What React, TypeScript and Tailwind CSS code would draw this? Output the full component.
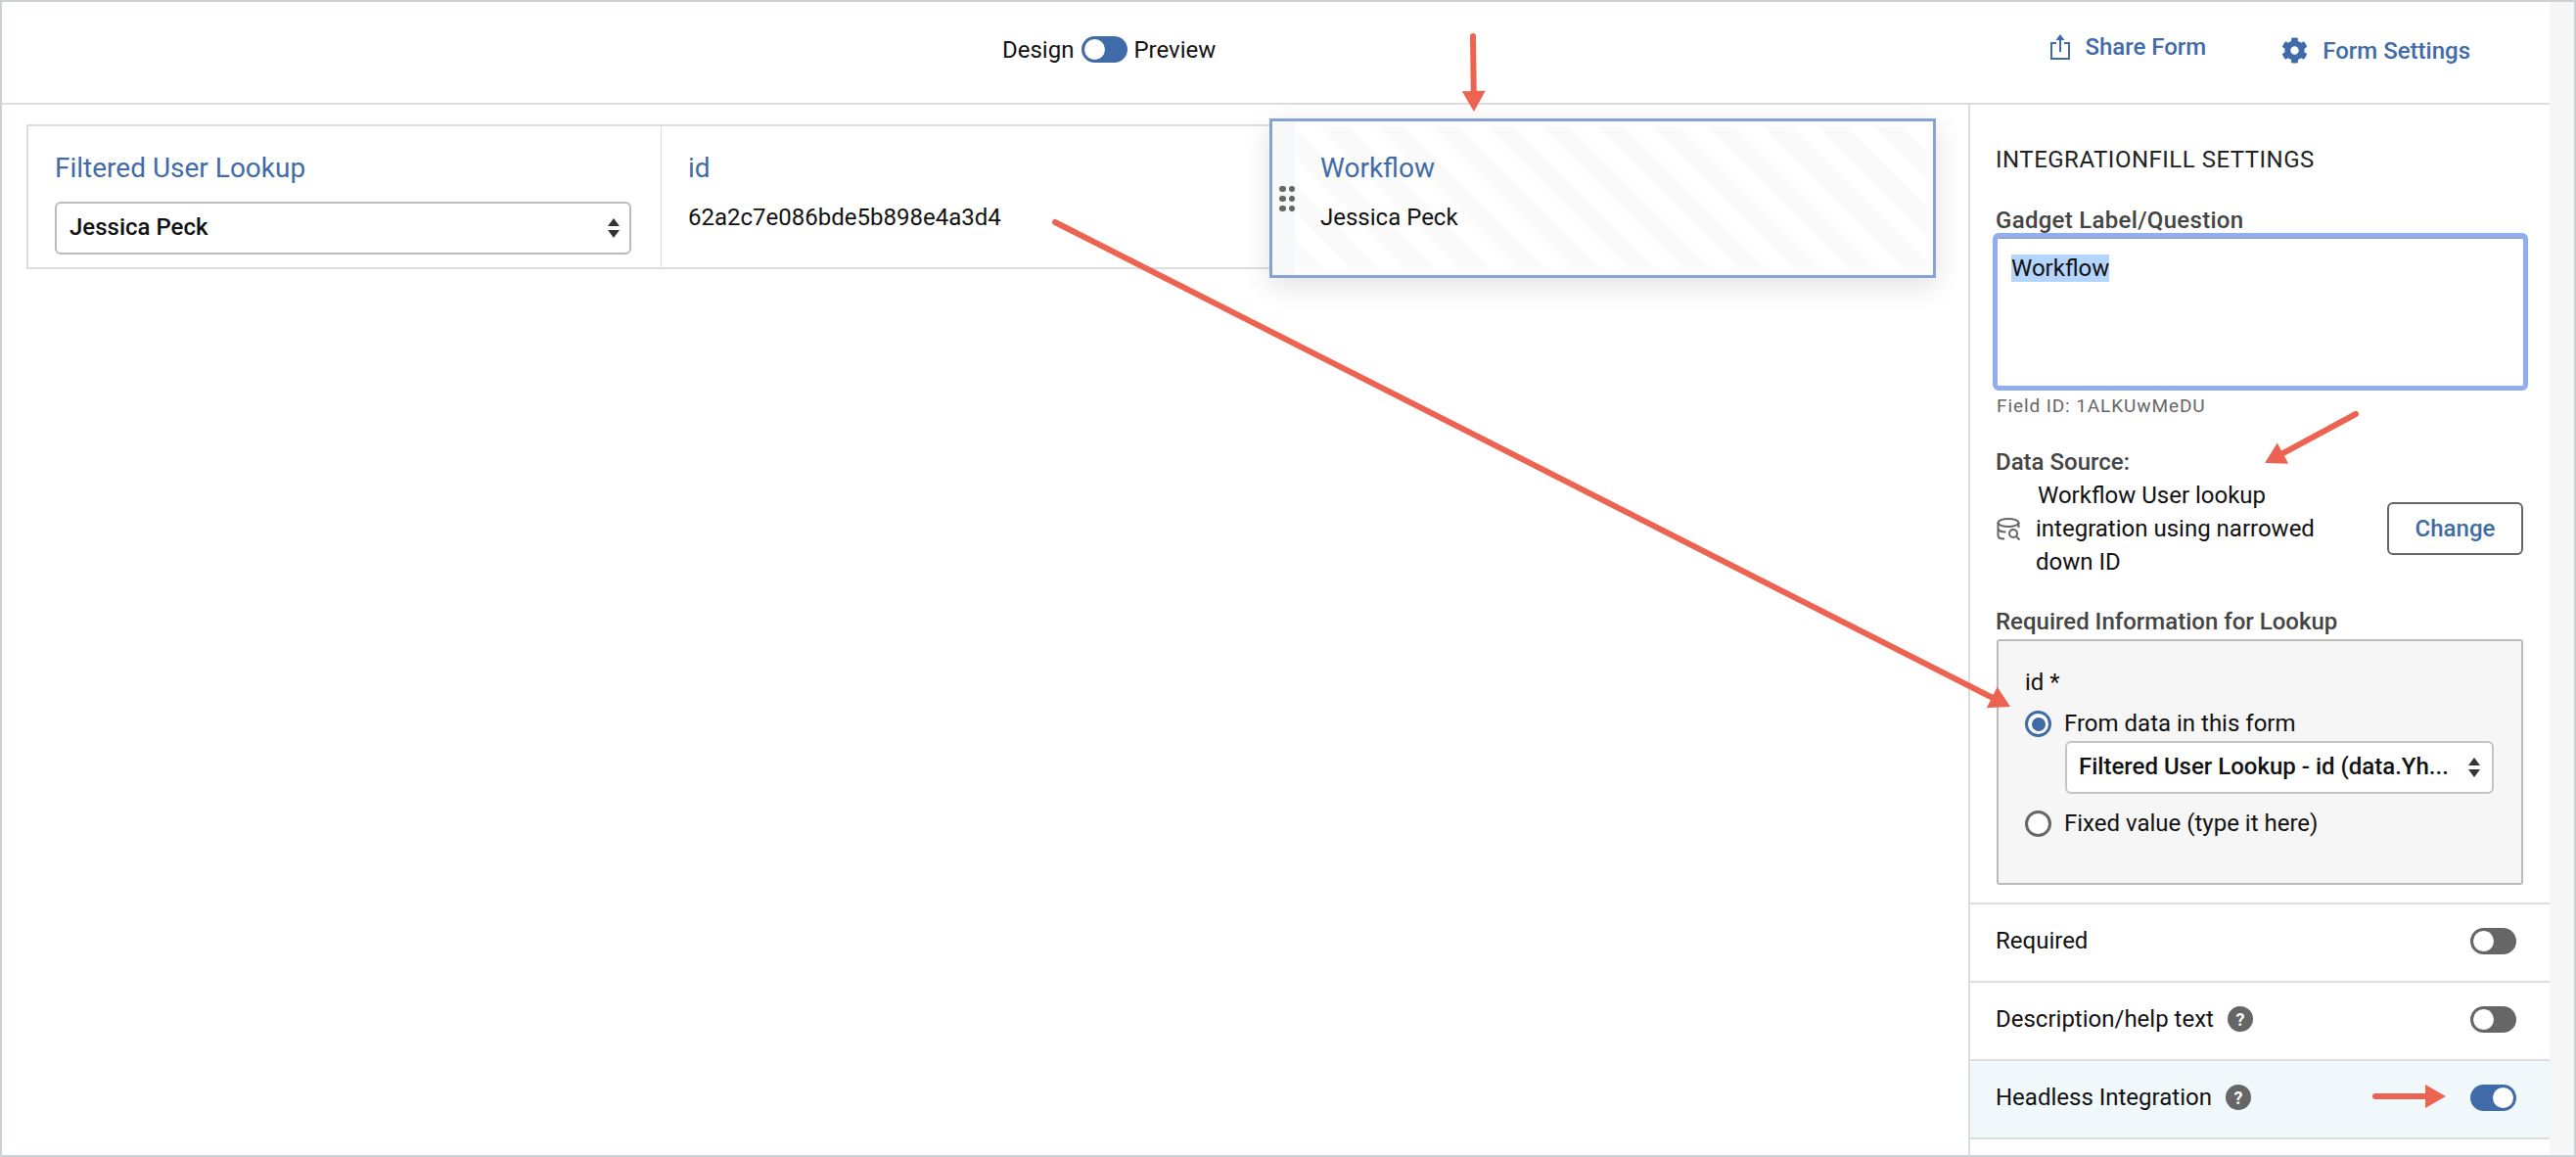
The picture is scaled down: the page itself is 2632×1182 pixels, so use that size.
import { FaCog } from 'react-icons/fa';

const font = { fontFamily: 'Roboto, sans-serif' };

function Toggle({ on = false, color = 'bg-[#666666]' }: { on?: boolean; color?: string }) {
  return (
    <div className={`flex h-[27px] w-[47px] shrink-0 items-center rounded-full px-[3px] ${color} ${on ? 'justify-end' : 'justify-start'}`}>
      <div className="h-[21px] w-[21px] rounded-full bg-white" />
    </div>
  );
}

function Chevrons({ className = '' }: { className?: string }) {
  return (
    <svg viewBox="0 0 12 20" className={`h-[20px] w-[12px] shrink-0 fill-[#333333] ${className}`}>
      <path d="M6 0 12 8H0z" />
      <path d="M6 20 0 12h12z" />
    </svg>
  );
}

function Help() {
  return (
    <span className="flex h-[26px] w-[26px] items-center justify-center rounded-full bg-[#666666] text-[18px] font-bold text-white">?</span>
  );
}

function Radio({ checked = false }: { checked?: boolean }) {
  return (
    <span className={`flex h-[27px] w-[27px] shrink-0 items-center justify-center rounded-full border-[3px] bg-white ${checked ? 'border-[#3f6ba8]' : 'border-[#666666]'}`}>
      {checked && <span className="h-[14px] w-[14px] rounded-full bg-[#3f6ba8]" />}
    </span>
  );
}

function Arrow({ x1, y1, x2, y2 }: { x1: number; y1: number; x2: number; y2: number }) {
  const len = Math.hypot(x2 - x1, y2 - y1);
  const ux = (x2 - x1) / len;
  const uy = (y2 - y1) / len;
  const bx = x2 - ux * 21;
  const by = y2 - uy * 21;
  const pts = `${x2},${y2} ${bx - uy * 12},${by + ux * 12} ${bx + uy * 12},${by - ux * 12}`;
  return (
    <g>
      <line x1={x1} y1={y1} x2={bx} y2={by} stroke="#ec6351" strokeWidth="6" strokeLinecap="round" />
      <polygon points={pts} fill="#ec6351" />
    </g>
  );
}

function SettingRow({ label, help, children, tint }: { label: string; help?: boolean; children: React.ReactNode; tint?: boolean }) {
  return (
    <div className={`flex h-[80px] items-center border-t-2 border-[#dddddd] pb-[4px] pl-[26px] pr-[34px] ${tint ? 'bg-[#f1f8fc]' : ''}`}>
      <span className="text-[24px] text-[#111111]">{label}</span>
      {help && <span className="ml-[14px]"><Help /></span>}
      <div className="ml-auto flex items-center">{children}</div>
    </div>
  );
}

export default function App() {
  return (
    <div style={font} className="relative flex h-[1182px] w-[2632px] overflow-hidden border-2 border-[#ccd1d4] bg-[#f6f6f6]">
      <div className="flex h-full w-[2603px] flex-col bg-white">
        {/* top bar */}
        <div className="flex h-[105px] shrink-0 items-start border-b-2 border-[#dddddd] pl-[1022px] pr-[81px]">
          <div className="mt-[35px] flex items-center text-[24px] leading-[26px] text-[#111111]">
            <span>Design</span>
            <span className="ml-[8px] mr-[6px]"><Toggle color="bg-[#3f6ba8]" /></span>
            <span>Preview</span>
          </div>
          <div className="ml-auto flex items-start">
            <div className="mt-[32px] flex items-center gap-[15px] text-[24px] font-medium leading-[26px] text-[#3f6ba8]">
              <svg viewBox="0 0 20 27" className="h-[27px] w-[20px] fill-none stroke-[#3f6ba8] stroke-2">
                <path d="M6 10H1v16h18V10h-5" />
                <path d="M10 19V4" />
                <path d="M5.500 7 10 1l4.500 6z" className="fill-[#3f6ba8] stroke-0" />
              </svg>
              <span>Share Form</span>
            </div>
            <div className="ml-[77px] mt-[36px] flex items-center gap-[15px] text-[24px] font-medium leading-[26px] text-[#3f6ba8]">
              <FaCog size={27} />
              <span>Form Settings</span>
            </div>
          </div>
        </div>

        <div className="flex min-h-0 flex-1">
          {/* canvas */}
          <div className="min-w-0 flex-1 pl-[25px] pt-[20px]">
            <div className="flex h-[148px] w-[1951px] items-start border-y-2 border-l-2 border-[#dddddd]">
              <div className="h-full w-[646px] shrink-0 pl-[27px] pt-[28px]">
                <div className="text-[28px] leading-[30px] text-[#3f6ba8]">Filtered User Lookup</div>
                <div className="mt-[19px] flex h-[54px] w-[589px] items-center justify-between rounded-[6px] border-2 border-[#bbbbbb] pl-[13px] pr-[10px] text-[24px] font-medium leading-[26px] text-[#111111]">
                  <span className="-mt-[3px]">Jessica Peck</span>
                  <Chevrons />
                </div>
              </div>
              <div className="h-full w-[622px] shrink-0 border-l border-[#dddddd] pl-[27px] pt-[28px]">
                <div className="text-[28px] leading-[30px] text-[#3f6ba8]">id</div>
                <div className="mt-[22px] text-[24px] leading-[26px] text-[#111111]">62a2c7e086bde5b898e4a3d4</div>
              </div>
              <div className="relative z-10 -mt-[8px] flex h-[163px] w-[681px] shrink-0 border-[3px] border-[#85a3d7] bg-[#fdfdfe] shadow-[0_8px_28px_rgba(0,0,0,0.12)]">
                <div className="flex w-[23px] shrink-0 items-center justify-end bg-[#f7f8fa] pt-[1px]">
                  <div className="grid grid-cols-2 gap-x-[3px] gap-y-[3.500px]">
                    {[0, 1, 2, 3, 4, 5].map((i) => (
                      <span key={i} className="h-[6.500px] w-[6.500px] rounded-full bg-[#666666]" />
                    ))}
                  </div>
                </div>
                <div className="flex-1 pb-[8px] pr-[7px] pt-[5px]">
                  <div className="h-full bg-[repeating-linear-gradient(45deg,#fafafa_0,#fafafa_20px,#ffffff_20px,#ffffff_40px)] pl-[26px] pt-[28px]">
                    <div className="text-[28px] leading-[30px] text-[#3f6ba8]">Workflow</div>
                    <div className="mt-[22px] text-[24px] leading-[26px] text-[#111111]">Jessica Peck</div>
                  </div>
                </div>
              </div>
            </div>
          </div>

          {/* settings panel */}
          <div className="flex w-[594px] shrink-0 flex-col border-l-2 border-[#dddddd]">
            <div className="px-[27px] pt-[43px]">
              <div className="-ml-px text-[24px] leading-[26px] tracking-[0.500px] text-[#222222]">INTEGRATIONFILL SETTINGS</div>
              <div className="-ml-px mt-[36px] text-[24px] font-medium leading-[26px] tracking-[0.300px] text-[#444444]">Gadget Label/Question</div>
              <div className="-ml-[4px] h-[161px] w-[547px] rounded-[6px] border-[5px] border-[#8fadef] bg-white pl-[14px] pt-[17px] text-[24px] leading-[28px] text-[#111111] shadow-[inset_0_1px_0_#999999]">
                <span className="bg-[#b4d5fe]">Workflow</span>
              </div>
              <div className="mt-[4px] text-[19px] leading-[24px] tracking-[0.900px] text-[#666666]">Field ID: 1ALKUwMeDU</div>
              <div className="-ml-px mt-[32px] text-[24px] font-medium leading-[26px] text-[#444444]">Data Source:</div>
              <div className="mt-[4px] flex items-center">
                <svg viewBox="0 0 25 23" className="h-[23px] w-[25px] shrink-0 fill-none stroke-[#666666] stroke-2">
                  <ellipse cx="12" cy="5" rx="10.500" ry="4" />
                  <path d="M1.500 5v13c0 2 2.500 3.500 6.500 3.500M22.500 5v5M1.500 11.500c1 2 4.500 3 8 3" />
                  <circle cx="17" cy="16" r="4" />
                  <path d="M20 19l3.500 3.500" />
                </svg>
                <div className="ml-[15px] w-[359px] shrink-0 text-[24px] leading-[34px] text-[#111111]">
                  <span className="ml-[2px]">Workflow User lookup</span>
                  <br />
                  integration using narrowed
                  <br />
                  down ID
                </div>
                <div className="flex h-[54px] w-[139px] shrink-0 items-center justify-center rounded-[6px] border-2 border-[#666666] text-[24px] font-medium text-[#3f6ba8]">Change</div>
              </div>
              <div className="-ml-px mt-[31px] text-[24px] font-medium leading-[26px] text-[#444444]">Required Information for Lookup</div>
              <div className="mt-[5px] h-[251px] w-[538px] rounded-[3px] border-2 border-[#bbbbbb] bg-[#f6f6f6] pl-[27px] pt-[29px] text-[24px] leading-[26px] text-[#111111]">
                <div>id *</div>
                <div className="mt-[16px] flex items-center gap-[13px]">
                  <Radio checked />
                  <span className="-mt-[2px]">From data in this form</span>
                </div>
                <div className="ml-[41px] mt-[4px] flex h-[54px] w-[438px] items-center justify-between rounded-[6px] border-2 border-[#c4c4c4] bg-white pl-[12px] pr-[12px] font-medium">
                  <span className="-mt-[2px]">Filtered User Lookup - id (data.Yh...</span>
                  <Chevrons />
                </div>
                <div className="mt-[17px] flex items-center gap-[13px]">
                  <Radio />
                  <span className="-mt-[2px]">Fixed value (type it here)</span>
                </div>
              </div>
            </div>
            <div className="mt-[18px]">
              <SettingRow label="Required"><Toggle /></SettingRow>
              <SettingRow label="Description/help text" help><Toggle /></SettingRow>
              <SettingRow label="Headless Integration" help tint><Toggle on color="bg-[#3f6ba8]" /></SettingRow>
              <div className="border-t-2 border-[#dddddd]" />
            </div>
          </div>
        </div>
      </div>

      {/* annotation arrows */}
      <svg className="pointer-events-none absolute -left-[2px] -top-[2px] z-20" width="2632" height="1182">
        <Arrow x1={1505} y1={37} x2={1506} y2={114} />
        <Arrow x1={1078} y1={227} x2={2054} y2={722} />
        <Arrow x1={2407} y1={423} x2={2314} y2={473} />
        <Arrow x1={2427} y1={1120} x2={2499} y2={1120} />
      </svg>
    </div>
  );
}
